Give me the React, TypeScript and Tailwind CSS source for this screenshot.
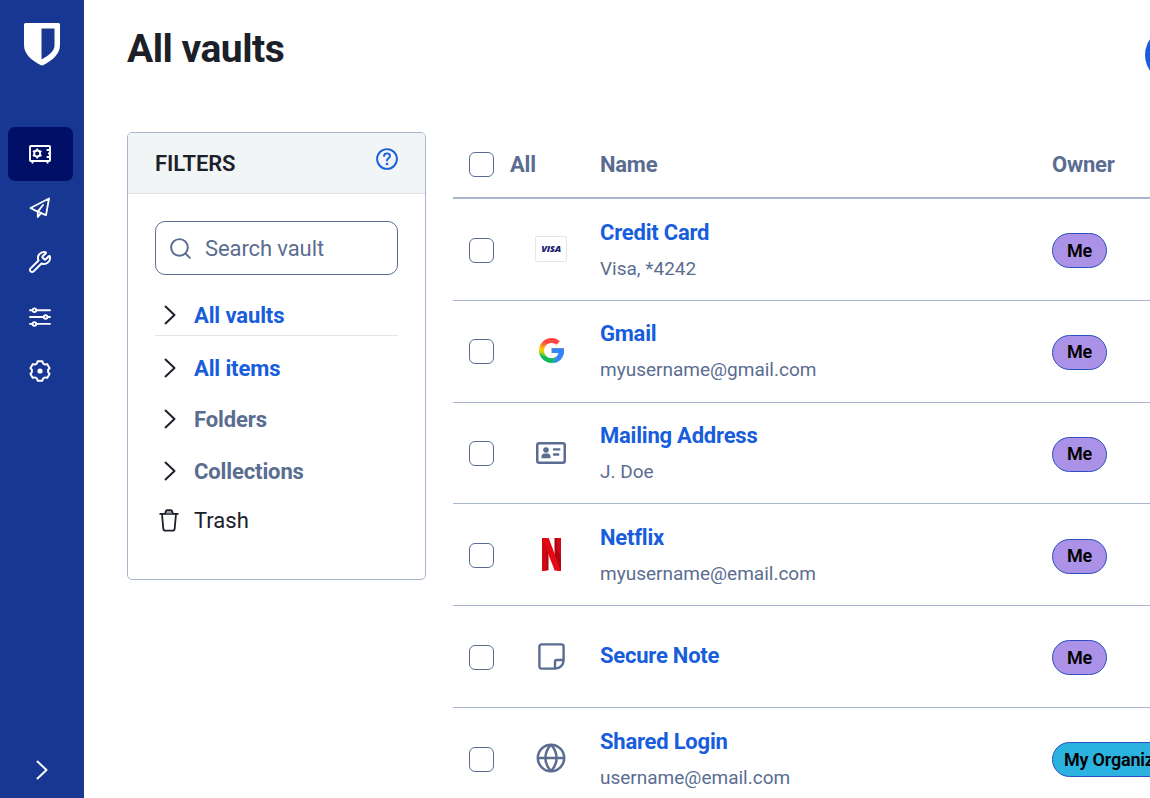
import type { ReactNode } from "react";
import { Wrench, Search } from "lucide-react";

function ShieldLogo() {
  return (
    <svg width="36" height="43" viewBox="0 0 36 43" className="mr-px">
      <path
        d="M1.5 0h33A1.5 1.5 0 0 1 36 1.5V22c0 9.500-8 15.500-16.500 20.100a3 3 0 0 1-3 0C8 37.500 0 31.500 0 22V1.500A1.500 1.500 0 0 1 1.500 0Z"
        fill="#fff"
      />
      <path d="M17.500 5.500H30.500V22c0 6-5 10-13 14.500Z" fill="#173793" />
    </svg>
  );
}

function VaultIcon() {
  return (
    <svg width="22" height="19" viewBox="0 0 22 19" fill="none" stroke="#fff" strokeWidth="1.9">
      <rect x="1" y="1" width="20" height="15" rx="0.8" />
      <circle cx="8.200" cy="8.500" r="3" />
      <path
        d="M8.200 3.500v2M8.200 11.500v2M3.900 6l1.700.9M10.700 9.900l1.800 1.100M3.900 11l1.700-1.100M10.700 7l1.800-1"
        strokeWidth="1.8"
      />
      <path d="M20 5h-2.400M20 12h-2.400M20.500 8.500h-1.500M3.500 16v2.500M18.500 16v2.500" />
    </svg>
  );
}

function SendIcon() {
  return (
    <svg
      width="22"
      height="22"
      viewBox="0 0 22 22"
      fill="none"
      stroke="#fff"
      strokeWidth="1.8"
      strokeLinejoin="round"
      strokeLinecap="round"
    >
      <path d="M20 1.500 1.500 11l5 2.600 2.300 1v5.400l3.300-3.900 4.900 2Z" />
      <path d="M8.800 14.600 14 8M12.100 16.100l-2-1.100" />
    </svg>
  );
}

function SlidersIcon() {
  return (
    <svg width="22" height="20" viewBox="0 0 22 20" fill="none" stroke="#fff" strokeWidth="1.9" strokeLinecap="round">
      <path d="M1 3.200h2.300M7.500 3.200H21M1 10h13.500M18.700 10H21M1 16.900h2.300M7.500 16.900H21" />
      <circle cx="5.400" cy="3.200" r="1.800" />
      <circle cx="16.600" cy="10" r="1.800" />
      <circle cx="5.400" cy="16.900" r="1.800" />
    </svg>
  );
}

// Six teeth, each one given by its angle offset in degrees and radius
const toothShape = [
  [-21, 8.2],
  [-14, 10],
  [14, 10],
  [21, 8.2],
];

const gearPoints = [0, 60, 120, 180, 240, 300]
  .flatMap((tooth) =>
    toothShape.map(([offset, radius]) => {
      const angle = ((tooth + offset - 90) * Math.PI) / 180;
      return `${(12 + radius * Math.cos(angle)).toFixed(2)},${(12 + radius * Math.sin(angle)).toFixed(2)}`;
    })
  )
  .join(" ");

function GearIcon() {
  return (
    <svg width="24" height="24" viewBox="0 0 24 24" fill="none" stroke="#fff" strokeWidth="1.9" strokeLinejoin="round">
      <polygon points={gearPoints} />
      <circle cx="12" cy="12" r="2.600" fill="#fff" stroke="none" />
    </svg>
  );
}

function Chevron({ className }: { className?: string }) {
  return (
    <svg
      width="12"
      height="20"
      viewBox="0 0 12 20"
      fill="none"
      stroke="currentColor"
      strokeWidth="2"
      strokeLinecap="round"
      strokeLinejoin="round"
      className={className}
    >
      <path d="m1.500 1.600 9 8.400-9 8.400" />
    </svg>
  );
}

function HelpIcon() {
  return (
    <svg width="22" height="22" viewBox="0 0 22 22" fill="none" stroke="#175ddc" strokeWidth="1.9" strokeLinecap="round">
      <circle cx="11" cy="11" r="9.900" />
      <path d="M8 8a3 3 0 0 1 3-2.600c1.700 0 3 1.100 3 2.700 0 2.200-3 2.300-3 4.400" />
      <circle cx="11" cy="16" r="1.300" fill="#175ddc" stroke="none" />
    </svg>
  );
}

function TrashIcon() {
  return (
    <svg
      width="20"
      height="23"
      viewBox="0 0 20 23"
      fill="none"
      stroke="#1b2029"
      strokeWidth="1.8"
      strokeLinecap="round"
      strokeLinejoin="round"
    >
      <path d="M1.200 4.900h17.600M3 5l1.300 14.600a2.200 2.200 0 0 0 2.200 2h7a2.200 2.200 0 0 0 2.200-2L17 5" />
      <path d="M6.200 4.600 6.900 2.100a1.400 1.400 0 0 1 1.200-.9h3.800a1.400 1.400 0 0 1 1.200.9l.7 2.500" fill="#9a9da3" />
    </svg>
  );
}

function VisaIcon() {
  return (
    <div className="flex h-[26px] w-8 items-center justify-center rounded-[2px] border border-[#e2e7ec] pb-px font-['Open_Sans',sans-serif] text-[9.5px] leading-none font-extrabold tracking-[-0.3px] text-[#1a1f71] italic">
      VISA
    </div>
  );
}

function GoogleIcon() {
  return (
    <svg width="25" height="25" viewBox="0 0 24 24">
      <defs>
        <linearGradient id="g-base" x1="0.3" y1="0" x2="0" y2="1">
          <stop offset="0.15" stopColor="#ff4641" />
          <stop offset="0.3" stopColor="#fd7a2b" />
          <stop offset="0.45" stopColor="#ffcc00" />
          <stop offset="0.58" stopColor="#c3cf13" />
          <stop offset="0.72" stopColor="#0ebc5f" />
          <stop offset="1" stopColor="#0eb55f" />
        </linearGradient>
        <linearGradient id="g-blue">
          <stop offset="0" stopColor="#3186ff" stopOpacity="0" />
          <stop offset="0.45" stopColor="#3186ff" />
        </linearGradient>
        <clipPath id="g-shape">
          <path d="M12 9.900h11.700c.2.700.3 1.400.3 2.300C24 19.200 19.200 24 12 24A12 12 0 1 1 12 0c3.200 0 6 1.200 8 3.100L16.800 6.500C15.600 5.400 14 4.700 12 4.700a7.300 7.300 0 0 0 0 14.600c3.700 0 6.200-2 6.700-4.900H12Z" />
        </clipPath>
      </defs>
      <g clipPath="url(#g-shape)">
        <rect width="24" height="24" fill="url(#g-base)" />
        <rect x="11.900" y="9" width="12.100" height="6" fill="#3186ff" />
        <rect x="12" y="14" width="12" height="10" fill="url(#g-blue)" />
      </g>
    </svg>
  );
}

function IdCardIcon() {
  return (
    <svg width="30" height="22" viewBox="0 0 30 22" fill="#5a6d91">
      <rect x="1.250" y="1.250" width="27.500" height="19.500" rx="2" fill="none" stroke="#5a6d91" strokeWidth="2.5" />
      <circle cx="10" cy="8" r="2.800" />
      <path d="M5.500 16.300v-1.800c0-1.700 1.100-2.700 3-2.900h3c1.900.2 3 1.200 3 2.900v1.800Z" />
      <path d="M18 7.400h5.300M18 12.500h4.300" stroke="#5a6d91" strokeWidth="2.4" strokeLinecap="round" />
    </svg>
  );
}

function NetflixIcon() {
  return (
    <svg width="19" height="33" viewBox="0 0 19 33">
      <path d="M0 0h6.500v32.200L0 33ZM12.500 0H19v33l-6.500-.8Z" fill="#b1060f" />
      <path d="M0 0v33l4.500-.5V12ZM15 0h4v20l-4-9Z" fill="#cf0a15" />
      <path d="M0 0h6.700L19 33c-2-.3-4-.6-6.400-.7Z" fill="#e50914" />
    </svg>
  );
}

function NoteIcon() {
  return (
    <svg width="27" height="27" viewBox="0 0 27 27" fill="none" stroke="#5a6d91" strokeWidth="2.4" strokeLinejoin="round">
      <path d="M3.500 1.400h20a2.100 2.100 0 0 1 2.100 2.100v13.700c0 4.800-3.600 8.400-8.400 8.400H3.500a2.100 2.100 0 0 1-2.100-2.100v-20a2.100 2.100 0 0 1 2.100-2.100Z" />
      <path d="M17 25.500v-6.800a1.700 1.700 0 0 1 1.700-1.700h6.800" />
    </svg>
  );
}

function GlobeIcon() {
  return (
    <svg width="30" height="30" viewBox="0 0 30 30" fill="none" stroke="#5a6d91" strokeWidth="2.5">
      <circle cx="15" cy="15" r="13.200" />
      <path d="M1.700 15h26.600M15 1.700c-7.400 7.800-7.400 18.800 0 26.600M15 1.700c7.400 7.800 7.400 18.800 0 26.600" />
    </svg>
  );
}

type VaultItem = {
  name: string;
  detail?: string;
  icon: ReactNode;
  owner: string;
};

const items: VaultItem[] = [
  { name: "Credit Card", detail: "Visa, *4242", icon: <VisaIcon />, owner: "Me" },
  { name: "Gmail", detail: "myusername@gmail.com", icon: <GoogleIcon />, owner: "Me" },
  { name: "Mailing Address", detail: "J. Doe", icon: <IdCardIcon />, owner: "Me" },
  { name: "Netflix", detail: "myusername@email.com", icon: <NetflixIcon />, owner: "Me" },
  { name: "Secure Note", icon: <NoteIcon />, owner: "Me" },
  { name: "Shared Login", detail: "username@email.com", icon: <GlobeIcon />, owner: "My Organization" },
];

function SideNav() {
  return (
    <nav className="flex w-[84px] shrink-0 flex-col items-center bg-[#173793] pt-[23px] pb-[18px]">
      <ShieldLogo />
      <div className="mt-[61px] mr-1 flex h-[54px] w-[65px] items-center justify-center rounded-[7px] bg-[#020f66]">
        <VaultIcon />
      </div>
      <div className="mr-1 flex flex-col items-center">
        <div className="flex h-[54px] items-center">
          <SendIcon />
        </div>
        <div className="flex h-[54px] items-center">
          <Wrench size={24} color="#fff" strokeWidth={2} />
        </div>
        <div className="flex h-[55px] items-center">
          <SlidersIcon />
        </div>
        <div className="flex h-[54px] items-center">
          <GearIcon />
        </div>
      </div>
      <Chevron className="mt-auto mr-px text-white" />
    </nav>
  );
}

function FilterRow({ label, className }: { label: string; className: string }) {
  return (
    <div className={`flex items-center pl-[9px] text-[22px] font-bold tracking-[-0.12px] ${className}`}>
      <Chevron className="mr-[18px] text-[#1b2029]" />
      {label}
    </div>
  );
}

function Filters() {
  return (
    <aside className="h-[447.5px] w-[299px] shrink-0 overflow-hidden rounded-[5px] border border-[#a8b5cd]">
      <div className="flex h-[61px] items-center justify-between border-b border-[#dfe5ea] bg-[#f1f5f6] px-[27px]">
        <h2 className="text-[22px] font-semibold tracking-[-0.1px] text-[#1b2029]">FILTERS</h2>
        <div className="pb-2">
          <HelpIcon />
        </div>
      </div>
      <div className="px-[27px] pt-[27px]">
        <div className="flex h-[54px] items-center rounded-[10px] border border-[#5a6d91] pl-3 text-[22px] tracking-[-0.1px] text-[#5a6d91]">
          <Search size={25} strokeWidth={1.9} className="mr-3" />
          Search vault
        </div>
        <FilterRow label="All vaults" className="mt-5 h-[41px] border-b border-[#dfe5ea] text-[#175ddc]" />
        <FilterRow label="All items" className="mt-[7px] h-[50px] text-[#175ddc]" />
        <FilterRow label="Folders" className="h-[52px] text-[#5a6d91]" />
        <FilterRow label="Collections" className="h-[52px] text-[#5a6d91]" />
        <div className="flex h-[46px] items-center pl-1 text-[22px] text-[#1b2029]">
          <span className="mr-[15px]">
            <TrashIcon />
          </span>
          Trash
        </div>
      </div>
    </aside>
  );
}

function Checkbox() {
  return <div className="h-[25px] w-[25px] shrink-0 rounded-[6px] border border-[#5a6d91] bg-white" />;
}

function ItemRow({ item }: { item: VaultItem }) {
  return (
    <div className="flex h-[101.8px] items-center border-b border-[#a8b5cd] pt-[1.5px] pl-4">
      <Checkbox />
      <div className="ml-9 flex w-[42px] shrink-0 justify-center pb-[2px]">{item.icon}</div>
      <div className={`ml-7 w-[452px] shrink-0 ${item.detail ? "pt-[2px]" : "pb-[3px]"}`}>
        <div className="text-[22px] leading-[34px] font-bold tracking-[-0.22px] text-[#175ddc]">{item.name}</div>
        {item.detail && <div className="text-[19px] leading-[37px] text-[#5a6d91]">{item.detail}</div>}
      </div>
      <span
        className={`mt-px flex h-[35px] shrink-0 items-center rounded-full border border-[#2a4fc0] pb-px text-[18px] font-semibold tracking-[-0.2px] whitespace-nowrap text-black ${
          item.owner === "Me" ? "bg-[#ab92e6] px-[14px]" : "bg-[#2cb2df] px-[11px]"
        }`}
      >
        {item.owner}
      </span>
    </div>
  );
}

export default function App() {
  return (
    <div className="flex h-[798px] w-[1150px] overflow-hidden bg-white font-[Roboto,sans-serif]">
      <SideNav />
      <main className="min-w-0 flex-1 pl-[43px]">
        <header className="flex h-[132px] items-start pt-7">
          <h1 className="w-[1018px] shrink-0 text-[39px] leading-[42px] font-bold tracking-[-0.5px] text-[#1b2029]">
            All vaults
          </h1>
          <div className="h-[54px] w-[54px] shrink-0 rounded-full bg-[#175ddc]" />
        </header>
        <div className="flex items-start">
          <Filters />
          <section className="ml-[27px] w-[697px] shrink-0">
            <div className="flex h-[67px] items-center border-b-2 border-[#a8b5cd] pl-4 text-[22px] font-bold tracking-[-0.22px] text-[#5a6d91]">
              <Checkbox />
              <span className="ml-4 w-[90px]">All</span>
              <span className="w-[452px]">Name</span>
              <span>Owner</span>
            </div>
            {items.map((item) => (
              <ItemRow key={item.name} item={item} />
            ))}
          </section>
        </div>
      </main>
    </div>
  );
}
